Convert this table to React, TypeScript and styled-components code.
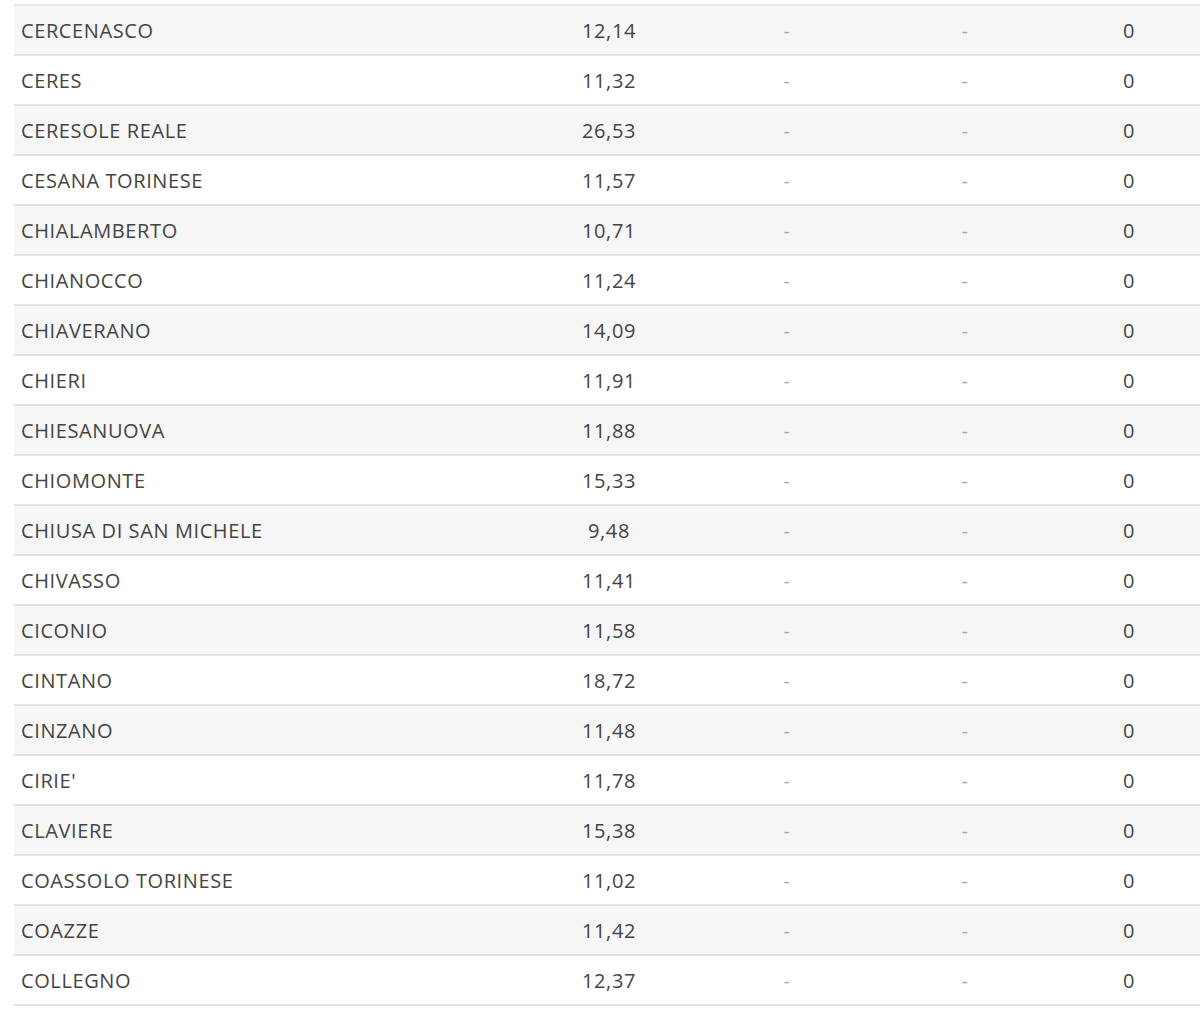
import styled, { createGlobalStyle } from "styled-components";

const rows: [string, string][] = [
  ["CERCENASCO", "12,14"],
  ["CERES", "11,32"],
  ["CERESOLE REALE", "26,53"],
  ["CESANA TORINESE", "11,57"],
  ["CHIALAMBERTO", "10,71"],
  ["CHIANOCCO", "11,24"],
  ["CHIAVERANO", "14,09"],
  ["CHIERI", "11,91"],
  ["CHIESANUOVA", "11,88"],
  ["CHIOMONTE", "15,33"],
  ["CHIUSA DI SAN MICHELE", "9,48"],
  ["CHIVASSO", "11,41"],
  ["CICONIO", "11,58"],
  ["CINTANO", "18,72"],
  ["CINZANO", "11,48"],
  ["CIRIE'", "11,78"],
  ["CLAVIERE", "15,38"],
  ["COASSOLO TORINESE", "11,02"],
  ["COAZZE", "11,42"],
  ["COLLEGNO", "12,37"],
];

const GlobalStyle = createGlobalStyle`
  html, body {
    margin: 0;
    padding: 0;
    background: #fff;
    overflow: hidden;
  }
`;

const Page = styled.div`
  padding: 4px 0 0 14px;
  width: 1200px;
`;

const Table = styled.table`
  border-collapse: collapse;
  table-layout: fixed;
  width: 1190px;
  font-family: "Open Sans", "Liberation Sans", sans-serif;
  font-size: 20px;
  letter-spacing: 0.6px;
  color: #444;
  border-top: 2px solid #e6e6e6;
`;

const Row = styled.tr<{ $striped: boolean }>`
  height: 50px;
  background: ${(p) => (p.$striped ? "#f6f6f6" : "#fff")};
  border-bottom: 2px solid #e3e3e3;
`;

const NameCell = styled.td`
  width: 492px;
  padding: 0 7px;
  text-align: left;
`;

const Cell = styled.td<{ $w: number; $muted?: boolean }>`
  width: ${(p) => p.$w}px;
  padding: 0;
  text-align: center;
  color: ${(p) => (p.$muted ? "#aaa" : "#444")};
`;

export default function App() {
  return (
    <>
      <GlobalStyle />
      <Page>
        <Table>
          <tbody>
            {rows.map(([name, value], idx) => (
              <Row key={name} $striped={idx % 2 === 0}>
                <NameCell>{name}</NameCell>
                <Cell $w={178}>{value}</Cell>
                <Cell $w={178} $muted>-</Cell>
                <Cell $w={178} $muted>-</Cell>
                <Cell $w={150}>0</Cell>
              </Row>
            ))}
          </tbody>
        </Table>
      </Page>
    </>
  );
}
